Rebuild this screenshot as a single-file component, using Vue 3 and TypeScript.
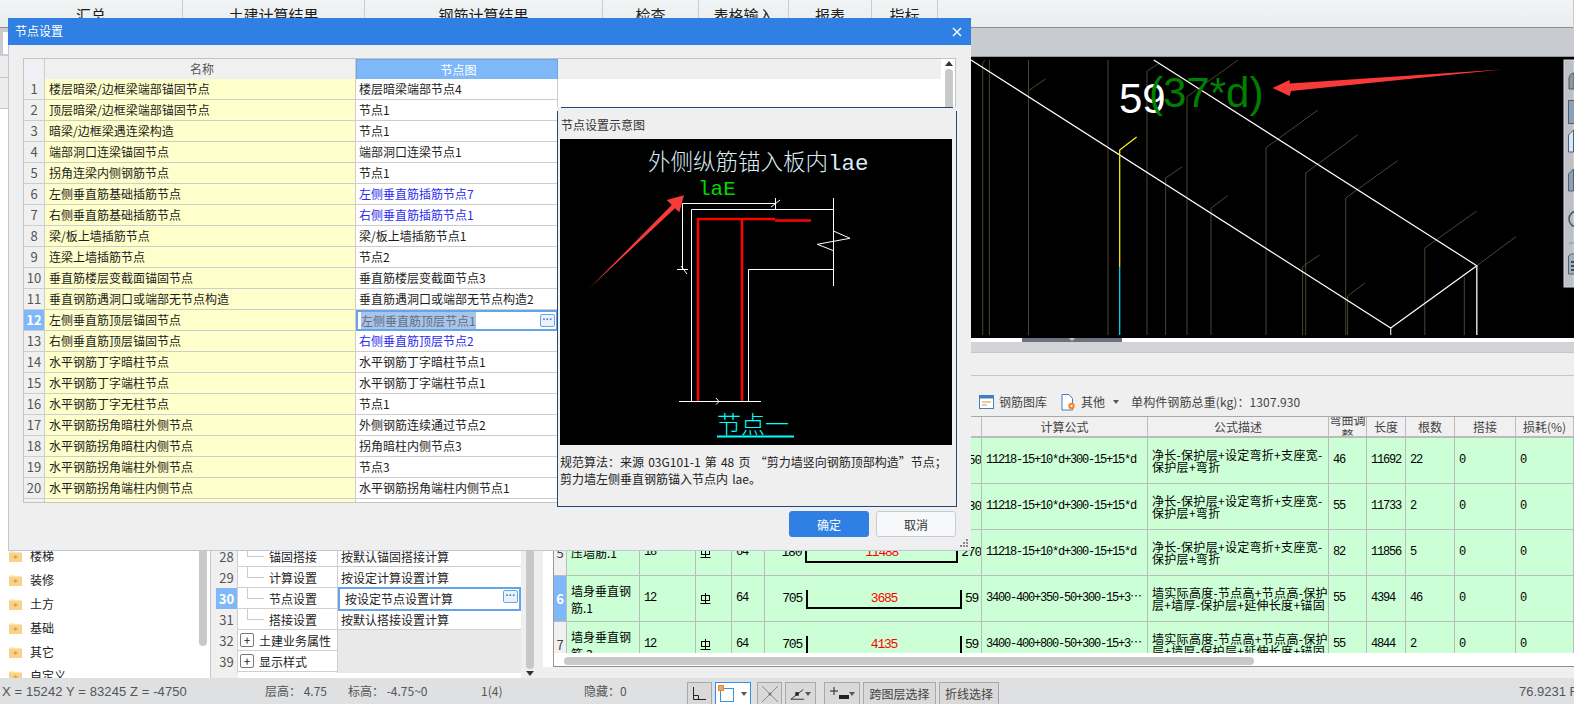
<template>
  <div class="app">
    <header class="tabs">
      <div v-for="t in tabs" :key="t" class="tab">{{ t }}</div>
    </header>

    <div class="main">
      <aside class="tree">
        <div class="tree-tool"><span class="tree-input"></span></div>
        <div class="tree-bar"></div>
        <div class="tree-bar tall"></div>
        <div class="tree-body">
          <ul class="tree-list">
            <li v-for="f in folders" :key="f">
              <svg width="15" height="14" viewBox="0 0 15 14">
                <path d="M1 2h5l1 1.500h7V13H1z" fill="#f6d28a" />
                <path d="M1 2h5l1 1.500H1z" fill="#fdf0d0" />
                <path d="M7.500 6v4M5.500 8h4" stroke="#e8a53c" stroke-width="1.400" />
              </svg>
              <span>{{ f }}</span>
            </li>
          </ul>
          <div class="tree-scroll"></div>
        </div>
      </aside>

      <section class="props">
        <div class="prop-grid">
          <div v-for="p in propRows" :key="p.no" class="prop-row" :class="{ group: p.group, active: p.active }">
            <div class="prop-no">{{ p.no }}</div>
            <div class="prop-name">
              <span v-if="p.group" class="plus">+</span>
              <span v-else class="branch"></span>
              {{ p.name }}
            </div>
            <div class="prop-val">
              {{ p.value }}
              <span v-if="p.active" class="dots">···</span>
            </div>
          </div>
          <div class="prop-end"><span></span></div>
        </div>
        <div class="prop-scroll">
          <div class="prop-thumb"></div>
          <div class="arrow-down"></div>
        </div>
      </section>

      <section class="work">
        <div class="band"></div>
        <svg class="canvas" width="1031" height="281" viewBox="543 57 1031 281">
          <rect x="543" y="57" width="1031" height="281" fill="#000" />
          <g fill="none" stroke="#4c4535" stroke-width="1">
            <path v-for="(d, i) in rebars" :key="i" :d="d" />
          </g>
          <g fill="none" stroke="#fff" stroke-width="1.200">
            <path d="M971 60L1390.700 328L1476.800 265.700L1153.800 60" />
            <path d="M1390.700 328V335" stroke="#ddd" />
            <path d="M1476.800 265.700V335" stroke="#ccc" stroke-width="1.600" />
          </g>
          <path d="M1136.600 137L1119.700 150V267" fill="none" stroke="#ffff00" stroke-width="1.200" />
          <path d="M1119.700 267V335" fill="none" stroke="#00e5ff" stroke-width="1.200" />
          <text x="1119" y="113" class="cad-num" fill="#fff">59</text>
          <text x="1149" y="107" class="cad-num" fill="#008000">(37*d)</text>
          <polygon points="1272.500,88 1289.700,80 1289.700,83.500 1502,69.500 1291,91 1289.700,96" fill="#f93a3a" />
          <rect x="1564" y="60" width="10" height="227" fill="#bdc0c5" stroke="#d8dadd" />
          <path d="M1569 89v-7a5 7 0 0 1 5 -9v16z" fill="#8d97a3" stroke="#4f5a68" />
          <rect x="1568.500" y="100.500" width="8" height="23" fill="#8fa0b5" stroke="#4f5f74" />
          <path d="M1568.500 152v-17l5 -5v22z" fill="#d8e8fb" stroke="#4f5f74" />
          <path d="M1568.500 191v-17l5 -5v22z" fill="#8fa0b5" stroke="#4f5f74" />
          <circle cx="1577" cy="219" r="8" fill="none" stroke="#4f5a68" stroke-width="1.600" />
          <path d="M1569 243h5" stroke="#8d939b" />
          <path d="M1568.500 274v-18l3 -2h3v20z" fill="#a7b1bd" stroke="#4f5f74" />
          <path d="M1571 262h3M1571 266h3M1571 270h3" stroke="#3e4b5c" stroke-width="2" />
        </svg>
        <div class="strip"><div class="handle"><i></i></div></div>
        <div class="sep"></div>
        <div class="gap"></div>
        <div class="tools">
          <svg width="15" height="14" viewBox="0 0 15 14">
            <rect x="0.500" y="0.500" width="14" height="13" fill="#fff" stroke="#3f7fc4" />
            <rect x="0.500" y="0.500" width="14" height="3" fill="#3f7fc4" />
            <path d="M3 7h9M3 10h5" stroke="#d99a45" />
          </svg>
          <span class="tool-label">钢筋图库</span>
          <svg class="doc" width="15" height="17" viewBox="0 0 15 17">
            <path d="M1 .500h7l3.500 4V16H1z" fill="#fff" stroke="#3f7fc4" />
            <circle cx="10.500" cy="12" r="3.200" fill="#f08a24" />
            <circle cx="10.500" cy="12" r="1.100" fill="#fff" />
          </svg>
          <span class="tool-label">其他</span>
          <i class="caret"></i>
          <span class="tool-total">单构件钢筋总重(kg)：1307.930</span>
        </div>
        <div class="frame-wrap">
          <div class="rebar-frame">
            <div class="rebar-grid">
              <div class="r-row r-head">
                <div v-for="h in rebarHead" :key="h" class="r-cell">{{ h }}</div>
              </div>
              <div v-for="r in rebarRows" :key="r.no" class="r-row r-body" :class="{ active: r.active }">
                <div class="r-cell r-no">{{ r.no }}</div>
                <div class="r-cell r-name">{{ r.name }}</div>
                <div class="r-cell r-mono">{{ r.dia }}</div>
                <div class="r-cell">
                  <svg width="11" height="11" viewBox="0 0 11 11">
                    <path d="M5.500 0v10M.500 10.500h10" stroke="#000" fill="none" />
                    <rect x="1.500" y="2.500" width="8" height="5" fill="none" stroke="#000" />
                  </svg>
                </div>
                <div class="r-cell r-mono">{{ r.fig }}</div>
                <div class="r-cell r-shape">
                  <span class="r-left">{{ r.left }}</span>
                  <span class="r-bracket">{{ r.mid }}</span>
                  <span class="r-right">{{ r.right }}</span>
                </div>
                <div class="r-cell r-mono r-formula">{{ r.formula }}</div>
                <div class="r-cell r-desc">{{ r.desc }}</div>
                <div class="r-cell r-mono">{{ r.bend }}</div>
                <div class="r-cell r-mono">{{ r.len }}</div>
                <div class="r-cell r-mono">{{ r.count }}</div>
                <div class="r-cell r-mono">0</div>
                <div class="r-cell r-mono">0</div>
              </div>
            </div>
            <div class="hscroll"><div class="hthumb"></div></div>
          </div>
        </div>
      </section>
    </div>

    <footer class="status">
      <span class="st-coord">X = 15242 Y = 83245 Z = -4750</span>
      <span class="st-floor">层高： 4.75</span>
      <span class="st-level">标高： -4.75~0</span>
      <span class="st-count">1(4)</span>
      <span class="st-hidden">隐藏：0</span>
      <button class="st-btn b-ortho">
        <svg width="15" height="15" viewBox="0 0 15 15"><path d="M1.500 1v12.500H14M1.500 9.500h5v4" fill="none" stroke="#222" /></svg>
      </button>
      <button class="st-btn b-select">
        <svg width="18" height="18" viewBox="0 0 18 18">
          <rect x="2.500" y="3.500" width="13" height="13" fill="#fff" stroke="#3f8fe0" />
          <rect x="0.500" y="0.500" width="5" height="5" fill="#f5a455" stroke="#e88a30" />
        </svg>
        <i class="caret"></i>
      </button>
      <button class="st-btn b-cross">
        <svg width="18" height="18" viewBox="0 0 18 18"><path d="M1 1l16 16M17 1L1 17" stroke="#8b8b8b" /><circle cx="9" cy="9" r="1.500" fill="#777" /></svg>
      </button>
      <button class="st-btn b-angle">
        <svg width="17" height="15" viewBox="0 0 17 15"><path d="M1 14h15M1 14L15 3" stroke="#222" fill="none" /><rect x="6" y="6" width="4" height="4" fill="#222" /></svg>
        <i class="caret"></i>
      </button>
      <button class="st-btn b-plus">
        <svg width="20" height="15" viewBox="0 0 20 15"><path d="M5 1v8M1 5h8" stroke="#222" /><rect x="10" y="9" width="10" height="4" fill="#222" /></svg>
        <i class="caret"></i>
      </button>
      <button class="st-btn b-text wide">跨图层选择</button>
      <button class="st-btn b-text">折线选择</button>
      <span class="st-scale">76.9231 F</span>
    </footer>

    <div class="dialog">
      <div class="dlg-title">
        <span>节点设置</span>
        <svg width="10" height="10" viewBox="0 0 10 10"><path d="M1 1l8 8M9 1L1 9" stroke="#fff" stroke-width="1.400" /></svg>
      </div>
      <div class="dlg-body">
        <div class="node-grid">
          <div class="node-table">
            <div class="n-row n-head">
              <div class="n-no"></div>
              <div class="n-name">名称</div>
              <div class="n-val">节点图</div>
            </div>
            <div v-for="(n, i) in nodeRows" :key="i" class="n-row" :class="{ active: i === 11 }">
              <div class="n-no">{{ i + 1 }}</div>
              <div class="n-name">{{ n[0] }}</div>
              <div class="n-val" :class="{ changed: blueRows.includes(i) }">
                <span class="n-text">{{ n[1] }}</span>
                <span v-if="i === 11" class="dots">···</span>
              </div>
            </div>
            <div class="n-row">
              <div class="n-no"></div>
              <div class="n-name"></div>
              <div class="n-val"></div>
            </div>
          </div>
          <div class="node-rest">
            <div class="node-rest-head"></div>
          </div>
          <div class="node-scroll">
            <div class="arrow-up"></div>
            <div class="node-thumb"></div>
          </div>

          <div class="sketch">
            <div class="sketch-title">节点设置示意图</div>
            <svg class="sketch-img" width="392" height="306" viewBox="560 139 392 306">
              <rect x="560" y="139" width="392" height="306" fill="#000" />
              <text x="648" y="170" class="sk-title">外侧纵筋锚入板内lae</text>
              <text x="698" y="195" class="sk-lae">laE</text>
              <g fill="none" stroke="#fff" stroke-width="1">
                <path d="M682.500 269V203.500H775.500M775.500 198V209.500M771 207l9 -7M677 269.500h11M681 266l6 8" />
                <path d="M691.500 401V209.500H833.500M833.500 198V286" />
                <path d="M833.500 231L850 238.300L817.300 244.300L833.500 250.700" />
                <path d="M748.500 401V269.500H833.500M679 401.500H761M716 398l3 3.500l-3 3" />
              </g>
              <path d="M698 401V219H775M775 220.500H811M742 220V401" fill="none" stroke="#ff0000" stroke-width="2.500" />
              <polygon points="684,195.300 666.700,200 671.700,205 589.300,288.300 675,208.300 679.300,212.300" fill="#f93a3a" />
              <text x="717" y="433" class="sk-node">节点一</text>
              <rect x="717" y="435.500" width="77" height="2" fill="#00ffff" />
            </svg>
            <p class="sketch-desc">规范算法：来源 03G101-1 第 48 页 “剪力墙竖向钢筋顶部构造”节点；<br />剪力墙左侧垂直钢筋锚入节点内 lae。</p>
          </div>
        </div>
        <div class="dlg-actions">
          <button class="btn primary">确定</button>
          <button class="btn">取消</button>
        </div>
      </div>
      <svg class="grip" width="9" height="9" viewBox="0 0 9 9">
        <path d="M6 0h2v2H6zM3 3h2v2H3zM6 3h2v2H6zM0 6h2v2H0zM3 6h2v2H3zM6 6h2v2H6z" fill="#8a8a8a" />
      </svg>
    </div>
  </div>
</template>

<script setup lang="ts">
interface PropRow {
  no: number
  name: string
  value: string
  group?: boolean
  active?: boolean
}

interface RebarRow {
  no: number
  name: string
  dia: number
  fig: number
  left: number
  mid: number
  right: number
  formula: string
  desc: string
  bend: number
  len: number
  count: number
  active?: boolean
}

const tabs = ['汇总', '土建计算结果', '钢筋计算结果', '检查', '表格输入', '报表', '指标', '']
const folders = ['楼梯', '装修', '土方', '基础', '其它', '自定义']

const propRows: PropRow[] = [
  { no: 28, name: '锚固搭接', value: '按默认锚固搭接计算' },
  { no: 29, name: '计算设置', value: '按设定计算设置计算' },
  { no: 30, name: '节点设置', value: '按设定节点设置计算', active: true },
  { no: 31, name: '搭接设置', value: '按默认搭接设置计算' },
  { no: 32, name: '土建业务属性', value: '', group: true },
  { no: 39, name: '显示样式', value: '', group: true }
]

const nodeRows: [string, string][] = [
  ['楼层暗梁/边框梁端部锚固节点', '楼层暗梁端部节点4'],
  ['顶层暗梁/边框梁端部锚固节点', '节点1'],
  ['暗梁/边框梁遇连梁构造', '节点1'],
  ['端部洞口连梁锚固节点', '端部洞口连梁节点1'],
  ['拐角连梁内侧钢筋节点', '节点1'],
  ['左侧垂直筋基础插筋节点', '左侧垂直筋插筋节点7'],
  ['右侧垂直筋基础插筋节点', '右侧垂直筋插筋节点1'],
  ['梁/板上墙插筋节点', '梁/板上墙插筋节点1'],
  ['连梁上墙插筋节点', '节点2'],
  ['垂直筋楼层变截面锚固节点', '垂直筋楼层变截面节点3'],
  ['垂直钢筋遇洞口或端部无节点构造', '垂直筋遇洞口或端部无节点构造2'],
  ['左侧垂直筋顶层锚固节点', '左侧垂直筋顶层节点1'],
  ['右侧垂直筋顶层锚固节点', '右侧垂直筋顶层节点2'],
  ['水平钢筋丁字暗柱节点', '水平钢筋丁字暗柱节点1'],
  ['水平钢筋丁字端柱节点', '水平钢筋丁字端柱节点1'],
  ['水平钢筋丁字无柱节点', '节点1'],
  ['水平钢筋拐角暗柱外侧节点', '外侧钢筋连续通过节点2'],
  ['水平钢筋拐角暗柱内侧节点', '拐角暗柱内侧节点3'],
  ['水平钢筋拐角端柱外侧节点', '节点3'],
  ['水平钢筋拐角端柱内侧节点', '水平钢筋拐角端柱内侧节点1']
]
const blueRows = [5, 6, 12]

const rebarHead = ['', '筋号', '直径', '级别', '图号', '图形', '计算公式', '公式描述', '弯曲调整', '长度', '根数', '搭接', '损耗(%)']

const topFormula = '11218-15+10*d+300-15+15*d'
const topDesc = '净长-保护层+设定弯折+支座宽-\n保护层+弯折'
const wallDesc = '墙实际高度-节点高+节点高-保护\n层+墙厚-保护层+延伸长度+锚固'

const rebarRows: RebarRow[] = [
  { no: 3, name: '压墙筋.1', dia: 18, fig: 64, left: 180, mid: 11488, right: 250, formula: topFormula, desc: topDesc, bend: 46, len: 11692, count: 22 },
  { no: 4, name: '压墙筋.1', dia: 18, fig: 64, left: 180, mid: 11488, right: 230, formula: topFormula, desc: topDesc, bend: 55, len: 11733, count: 2 },
  { no: 5, name: '压墙筋.1', dia: 18, fig: 64, left: 180, mid: 11488, right: 270, formula: topFormula, desc: topDesc, bend: 82, len: 11856, count: 5 },
  { no: 6, name: '墙身垂直钢筋.1', dia: 12, fig: 64, left: 705, mid: 3685, right: 59, formula: '3400-400+350-50+300-15+3⋯', desc: wallDesc, bend: 55, len: 4394, count: 46, active: true },
  { no: 7, name: '墙身垂直钢筋.2', dia: 12, fig: 64, left: 705, mid: 4135, right: 59, formula: '3400-400+800-50+300-15+3⋯', desc: wallDesc, bend: 55, len: 4844, count: 2 }
]

// x bottom / top of each bar, then the end of its short hook
const hooks: [number, number, number, number][] = [
  [982.7, 63, 985, 60],
  [1028.5, 90.7, 1045.4, 79],
  [1147, 71, 1159.7, 63],
  [1165.6, 178, 1182.4, 166.7],
  [1187, 96.7, 1238, 60],
  [1211, 208, 1227.8, 195.7],
  [1266, 147.7, 1317.9, 110],
  [1302.6, 266.7, 1319.4, 255],
  [1305.7, 173, 1357.4, 135],
  [1345.7, 198, 1397.4, 160.7],
  [1347.6, 296, 1365, 283],
  [1424.8, 248, 1476.8, 211]
]

const rebars: string[] = [
  ...hooks.map(([x, y, hx, hy]) => `M${x} 335V${y}L${hx} ${hy}`),
  'M1028.500 90.700V60',
  'M989.400 335V60',
  'M1108 335V60',
  'M1464.300 335V276.700',
  'M1476.800 265.700L1516 236.700'
]
</script>

<style>
html,
body {
  margin: 0;
  padding: 0;
  overflow: hidden;
}
</style>

<style scoped>
.app {
  position: relative;
  width: 1574px;
  height: 704px;
  overflow: hidden;
  display: flex;
  flex-direction: column;
  background: #efefef;
  color: #1c1c1c;
  font: 12px/1.2 "Noto Sans CJK SC", sans-serif;
}

/* top tabs */
.tabs {
  flex: none;
  height: 28px;
  box-sizing: border-box;
  display: grid;
  grid-template-columns: 183px 182px 238px 96px 90px 83px 66px 1fr;
  background: linear-gradient(#f1f4f4, #e9eded);
  border-bottom: 1px solid #8d8f92;
}
.tab {
  font-size: 15px;
  line-height: 30px;
  text-align: center;
  border-right: 1px solid #c9cccc;
}

.main {
  flex: none;
  height: 650px;
  display: flex;
}

/* left folder tree */
.tree {
  flex: none;
  width: 211px;
  margin-right: 3px;
  display: flex;
  flex-direction: column;
  background: #fff;
  border-right: 1px solid #c8c8c8;
  box-sizing: border-box;
}
.tree-tool {
  flex: none;
  height: 28px;
  box-sizing: border-box;
  padding: 4px 0 2px 3px;
  background: #c9cbcf;
}
.tree-input {
  display: block;
  width: 100px;
  height: 22px;
  background: #fff;
}
.tree-bar {
  flex: none;
  height: 21px;
  background: #ececec;
  border-bottom: 1px solid #c8c8c8;
}
.tree-bar.tall {
  height: 30px;
}
.tree-body {
  flex: 1;
  min-height: 0;
  display: flex;
  overflow: hidden;
}
.tree-list {
  flex: 1;
  list-style: none;
  margin: 0;
  padding: 435px 0 0 8px;
}
.tree-list li {
  height: 24px;
  display: flex;
  align-items: center;
  gap: 7px;
  color: #222;
}
.tree-scroll {
  flex: none;
  width: 8px;
  height: 537px;
  margin-right: 3px;
  background: #c8c8c8;
  border-radius: 0 0 4px 4px;
}

/* middle property grid */
.props {
  flex: none;
  width: 320px;
  padding-left: 2px;
  box-sizing: border-box;
  display: flex;
  background: #efefef;
}
.prop-grid {
  flex: none;
  width: 305px;
  padding-top: 518px;
}
.prop-row {
  display: grid;
  grid-template-columns: 22px 100px 183px;
  height: 21px;
  box-sizing: border-box;
  line-height: 22px;
  background: #fff;
  border-bottom: 1px solid #cfcfcf;
  color: #222;
  font-size: 12px;
}
.prop-no {
  background: #f0f0f0;
  text-align: center;
  color: #555;
  font-size: 13px;
  border-right: 1px solid #cfcfcf;
}
.prop-name {
  position: relative;
  padding-left: 31px;
  border-right: 1px solid #cfcfcf;
}
.branch {
  position: absolute;
  left: 9px;
  top: -1px;
  width: 16px;
  height: 11px;
  border-left: 1px solid #ccc;
  border-bottom: 1px solid #ccc;
}
.prop-val {
  position: relative;
  padding-left: 3px;
}
.prop-row.group .prop-name {
  padding-left: 21px;
}
.plus {
  position: absolute;
  left: 2px;
  top: 3px;
  width: 12px;
  height: 12px;
  border: 1px solid #777;
  border-radius: 2px;
  line-height: 11px;
  text-align: center;
  font-size: 12px;
}
.prop-row.group .prop-val {
  background: #e9e9e9;
}
.prop-row.active .prop-no {
  background: #7fb8f8;
  color: #fff;
  font-weight: 700;
}
.prop-row.active .prop-val {
  margin: -1px 0;
  padding-left: 5px;
  border: 2px solid #63a4ea;
  box-sizing: border-box;
  background: #fff;
  line-height: 20px;
}
.dots {
  position: absolute;
  right: 1px;
  top: 1px;
  width: 15px;
  height: 13px;
  box-sizing: border-box;
  border: 1px solid #6aa5e0;
  border-radius: 2px;
  background: #eaf3fc;
  color: #3a78bb;
  font: 700 10px/9px "Liberation Sans", sans-serif;
  text-align: center;
}
.prop-end {
  height: 6px;
  background: #fff;
}
.prop-end span {
  display: block;
  width: 22px;
  height: 6px;
  background: #f0f0f0;
}
.prop-scroll {
  flex: none;
  width: 8px;
  margin-left: 5px;
  display: flex;
  flex-direction: column;
  align-items: center;
}
.prop-thumb {
  width: 8px;
  height: 641px;
  background: #c8c8c8;
  border-radius: 0 0 4px 4px;
}
.arrow-down {
  margin-top: 2px;
  border: 4px solid transparent;
  border-top: 5px solid #333;
  border-bottom: 0;
}

/* right work area */
.work {
  flex: 1;
  min-width: 0;
  margin-left: 9px;
  display: flex;
  flex-direction: column;
  background: #efefef;
}
.band {
  flex: none;
  height: 29px;
  box-sizing: border-box;
  background: #c8cbd0;
  border-bottom: 1px solid #9a9a9a;
}
.canvas {
  flex: none;
  display: block;
}
.cad-num {
  font: 42px "Liberation Sans", sans-serif;
}
.strip {
  flex: none;
  height: 4px;
  background: #fff;
}
.handle {
  width: 100px;
  height: 4px;
  margin-left: 479px;
  background: #6c7480;
  display: flex;
  justify-content: center;
}
.handle i {
  border: 3px solid transparent;
  border-top: 3px solid #c8ccd0;
  border-bottom: 0;
}
.sep {
  flex: none;
  height: 11px;
  background: #d3d4d8;
  border-bottom: 1px solid #c6c7ca;
  box-sizing: border-box;
}
.gap {
  flex: none;
  height: 23px;
  box-sizing: border-box;
  background: #efefef;
  border-bottom: 1px solid #c6c6c6;
}
.tools {
  flex: none;
  height: 41px;
  box-sizing: border-box;
  display: flex;
  align-items: center;
  padding: 12px 0 0 436px;
  background: #efefef;
  border-bottom: 1px solid #a9a9a9;
  color: #444;
}
.tool-label {
  margin-left: 5px;
}
.doc {
  margin-left: 14px;
}
.caret {
  display: inline-block;
  width: 0;
  height: 0;
  border: 3px solid transparent;
  border-top: 4px solid #555;
  border-bottom: 0;
}
.tools .caret {
  margin-left: 8px;
}
.tool-total {
  margin-left: 12px;
  font-size: 12px;
  letter-spacing: .1px;
}

/* rebar table */
.frame-wrap {
  flex: none;
  padding-left: 10px;
  background: #fff;
}
.rebar-frame {
  height: 250px;
  box-sizing: border-box;
  border-left: 1px solid #999;
  border-bottom: 1px solid #8f8f8f;
  background: #fff;
}
.rebar-grid {
  height: 236px;
  overflow: hidden;
}
.r-row {
  display: grid;
  grid-template-columns: 13px 73px 56px 36px 33px 217px 166px 181px 38px 39px 49px 61px 1fr;
}
.r-cell {
  box-sizing: border-box;
  padding-left: 4px;
  border-right: 1px solid #bcbcbc;
  border-bottom: 1px solid #bcbcbc;
  display: flex;
  align-items: center;
  overflow: hidden;
}
.r-head {
  height: 21px;
  background: #f0f0f0;
  color: #444;
}
.r-head .r-cell {
  justify-content: center;
  padding: 0;
  line-height: 15px;
  text-align: center;
  font-size: 12px;
  border-bottom: 2px solid #bcbcbc;
}
.r-body {
  height: 46px;
  background: #ccffd5;
  color: #000;
}
.r-no {
  padding: 0;
  justify-content: center;
  background: #f0f0f0;
  color: #444;
  font-size: 13px;
}
.r-body.active .r-no {
  background: #7fb8f8;
  color: #fff;
  font-weight: 700;
}
.r-name {
  line-height: 17px;
  font-size: 12px;
  word-break: break-all;
}
.r-mono {
  font-family: "Liberation Mono", "Noto Sans CJK SC", monospace;
  font-size: 12px;
  letter-spacing: -1.2px;
}
.r-shape {
  padding: 0;
  font: 13px "Liberation Mono", monospace;
  letter-spacing: -1.200px;
}
.r-left {
  width: 37px;
  margin-right: 4px;
  text-align: right;
}
.r-bracket {
  width: 156px;
  height: 19px;
  box-sizing: border-box;
  border: 2px solid #000;
  border-top: 0;
  margin-top: 1px;
  margin-right: 3px;
  color: #f00;
  line-height: 17px;
  text-align: center;
}
.r-formula {
  white-space: nowrap;
}
.r-desc {
  line-height: 12px;
  white-space: pre;
  font-size: 12px;
  letter-spacing: .3px;
}
.hscroll {
  height: 13px;
  padding: 4px 0 0 10px;
  box-sizing: border-box;
}
.hthumb {
  width: 690px;
  height: 8px;
  border-radius: 4px;
  background: #c8c8c8;
}

/* status bar */
.status {
  flex: none;
  height: 26px;
  display: flex;
  align-items: flex-end;
  background: #dfe0e2;
  color: #555;
  font-size: 12px;
  overflow: hidden;
}
.status > * {
  flex: none;
}
.status span {
  align-self: center;
  white-space: nowrap;
}
.st-coord {
  width: 265px;
  padding-left: 2px;
  box-sizing: border-box;
  font: 13px "Liberation Sans", sans-serif;
  letter-spacing: .1px;
}
.st-floor {
  width: 83px;
}
.st-level {
  width: 133px;
}
.st-count {
  width: 103px;
}
.st-hidden {
  width: 103px;
}
.st-btn {
  height: 22px;
  padding: 0 4px;
  margin: 0 3px 0 0;
  box-sizing: border-box;
  display: flex;
  align-items: center;
  justify-content: space-between;
  border: 1px solid #a8a8a8;
  border-bottom: 0;
  border-radius: 0;
  background: #d9d9d9;
  font: 12px "Noto Sans CJK SC", sans-serif;
  color: #444;
}
.b-ortho {
  width: 25px;
}
.b-select {
  width: 36px;
  margin-right: 6px;
  padding: 0 3px 0 2px;
  background: #fff;
  border-color: #2f90ea;
}
.b-cross {
  width: 25px;
  justify-content: center;
  padding: 0;
}
.b-angle {
  width: 31px;
  margin-right: 8px;
}
.b-plus {
  width: 36px;
}
.b-text {
  width: 60px;
  justify-content: center;
  padding: 0;
}
.b-text.wide {
  width: 73px;
}
.status .st-scale {
  margin-left: 517px;
  font: 13px "Liberation Sans", sans-serif;
}

/* dialog on top of the app */
.dialog {
  position: absolute;
  left: 8px;
  top: 18px;
  width: 963px;
  height: 533px;
  box-sizing: border-box;
  display: flex;
  flex-direction: column;
  background: #efefef;
  border-left: 1px solid #bcc8da;
  border-bottom: 1px solid #bcc8da;
}
.dlg-title {
  flex: none;
  height: 27px;
  padding: 0 9px 0 7px;
  margin-left: -1px;
  display: flex;
  align-items: center;
  justify-content: space-between;
  background: #2f80e2;
  color: #fff;
  font-size: 12px;
}
.dlg-body {
  flex: 1;
  min-height: 0;
  padding: 13px 15px 0 14px;
}
.node-grid {
  position: relative;
  height: 445px;
  box-sizing: border-box;
  display: flex;
  border: 1px solid #c4c4c4;
  background: #fff;
}
.node-table {
  flex: none;
  width: 534px;
  overflow: hidden;
}
.n-row {
  display: grid;
  grid-template-columns: 21px 311px 202px;
  height: 21px;
}
.n-row > div {
  box-sizing: border-box;
  border-right: 1px solid #cdcdcd;
  border-bottom: 1px solid #cdcdcd;
  line-height: 20px;
  white-space: nowrap;
}
.n-no {
  background: #f0f0f0;
  text-align: center;
  color: #555;
  font-size: 13px;
}
.n-name {
  padding-left: 4px;
  background: #ffffcc;
}
.n-val {
  position: relative;
  padding-left: 3px;
  background: #fff;
}
.n-val.changed {
  color: #2c2cf0;
}
.n-head {
  height: 20px;
}
.n-head .n-name {
  text-align: center;
  background: #f0f0f0;
  color: #555;
}
.n-head .n-no {
  background: #eef0f5;
}
.n-head .n-val {
  text-align: center;
  background: #7fb8f8;
  color: #fff;
  border: 1px solid #6aa5e0;
}
.n-row.active .n-no {
  background: #7fb8f8;
  color: #fff;
  font-weight: 700;
}
.n-row.active .n-val {
  border: 2px solid #63a4ea;
  padding-left: 3px;
  color: #5f6f85;
  line-height: 17px;
}
.n-row.active .n-text {
  background: #a9c4e6;
}
.n-row.active .dots {
  top: 2px;
}
.node-rest {
  flex: 1;
  min-width: 0;
}
.node-rest-head {
  height: 20px;
  background: #efefef;
}
.node-scroll {
  flex: none;
  width: 14px;
  padding-right: 2px;
  box-sizing: border-box;
  display: flex;
  flex-direction: column;
  align-items: flex-end;
}
.arrow-up {
  margin-top: 2px;
  border: 4px solid transparent;
  border-bottom: 5px solid #333;
  border-top: 0;
}
.node-thumb {
  width: 8px;
  height: 39px;
  margin-top: 3px;
  border-radius: 4px 4px 0 0;
  background: #c8c8c8;
}
.sketch {
  position: absolute;
  left: 533px;
  top: 48px;
  width: 400px;
  height: 400px;
  box-sizing: border-box;
  padding: 4px 3px 0;
  background: #efefef;
}
.sketch::before {
  content: "";
  position: absolute;
  left: 4px;
  right: 4px;
  top: 0;
  height: 1px;
  background: #24487c;
}
.sketch::after {
  content: "";
  position: absolute;
  inset: 4px 0 0;
  border: 1px solid #24487c;
  border-top: 0;
  pointer-events: none;
}
.sketch-title {
  height: 28px;
  line-height: 28px;
  padding-left: 1px;
  color: #333;
}
.sketch-img {
  display: block;
}
.sketch-desc {
  margin: 8px 0 0;
  line-height: 17px;
  color: #222;
  font-size: 12px;
  white-space: nowrap;
  word-spacing: 1.500px;
}
.sk-title {
  font: 300 22.500px "Liberation Mono", "Noto Sans CJK SC", monospace;
  fill: #dceaf4;
}
.sk-lae {
  font: 21px "Liberation Mono", monospace;
  fill: #00d800;
}
.sk-node {
  font: 300 24px "Noto Sans CJK SC", sans-serif;
  fill: #00ffff;
}
.dlg-actions {
  display: flex;
  justify-content: flex-end;
  gap: 7px;
  margin-top: 8px;
}
.btn {
  width: 80px;
  height: 26px;
  padding: 0;
  box-sizing: border-box;
  border: 1px solid #c6ccd6;
  border-radius: 3px;
  background: #f7f8fa;
  color: #333;
  font: 12px "Noto Sans CJK SC", sans-serif;
}
.btn.primary {
  background: #2f80e2;
  border-color: #2f80e2;
  color: #fff;
}
.grip {
  position: absolute;
  right: 2px;
  bottom: 2px;
}
</style>
